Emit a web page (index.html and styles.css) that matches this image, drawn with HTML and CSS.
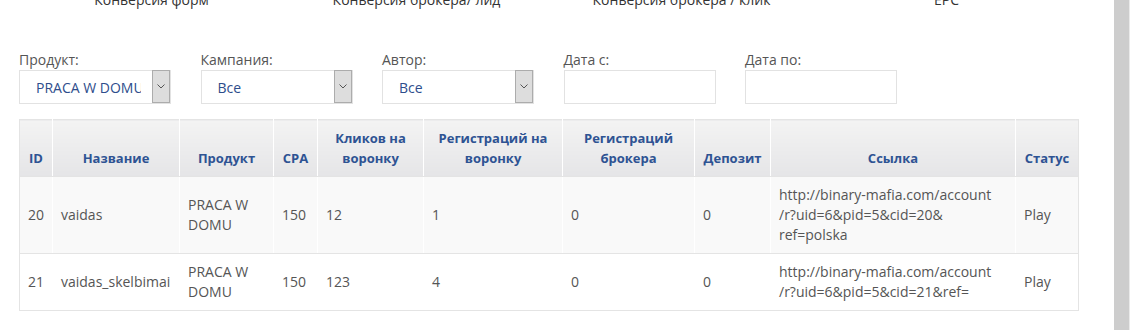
FILE: index.html
```html
<!DOCTYPE html>
<html lang="ru">
<head>
<meta charset="utf-8">
<title>Кампании</title>
<link rel="stylesheet" href="styles.css">
</head>
<body>
<div class="layout">
  <main class="page">
    <div class="stats">
      <div class="stat">Конверсия форм</div>
      <div class="stat">Конверсия брокера/ лид</div>
      <div class="stat">Конверсия брокера / клик</div>
      <div class="stat">EPC</div>
    </div>

    <div class="filters">
      <div class="field">
        <label class="label">Продукт:</label>
        <div class="select">
          <span class="select-value">PRACA W DOMU</span>
          <span class="select-btn"><svg width="8" height="5" viewBox="0 0 8 5"><path d="M0.5 0.5 L4 4 L7.5 0.5" fill="none" stroke="#555" stroke-width="1"/></svg></span>
        </div>
      </div>
      <div class="field">
        <label class="label">Кампания:</label>
        <div class="select">
          <span class="select-value">Все</span>
          <span class="select-btn"><svg width="8" height="5" viewBox="0 0 8 5"><path d="M0.5 0.5 L4 4 L7.5 0.5" fill="none" stroke="#555" stroke-width="1"/></svg></span>
        </div>
      </div>
      <div class="field">
        <label class="label">Автор:</label>
        <div class="select">
          <span class="select-value">Все</span>
          <span class="select-btn"><svg width="8" height="5" viewBox="0 0 8 5"><path d="M0.5 0.5 L4 4 L7.5 0.5" fill="none" stroke="#555" stroke-width="1"/></svg></span>
        </div>
      </div>
      <div class="field">
        <label class="label">Дата с:</label>
        <div class="input"></div>
      </div>
      <div class="field">
        <label class="label">Дата по:</label>
        <div class="input"></div>
      </div>
    </div>

    <table class="grid">
      <colgroup>
        <col class="c-id"><col class="c-name"><col class="c-prod"><col class="c-cpa"><col class="c-clicks"><col class="c-reg"><col class="c-regb"><col class="c-dep"><col class="c-link"><col class="c-status">
      </colgroup>
      <thead>
        <tr>
          <th>ID</th>
          <th>Название</th>
          <th>Продукт</th>
          <th>CPA</th>
          <th>Кликов на воронку</th>
          <th>Регистраций на воронку</th>
          <th>Регистраций брокера</th>
          <th>Депозит</th>
          <th>Ссылка</th>
          <th>Статус</th>
        </tr>
      </thead>
      <tbody>
        <tr class="odd">
          <td>20</td>
          <td>vaidas</td>
          <td>PRACA W DOMU</td>
          <td>150</td>
          <td>12</td>
          <td>1</td>
          <td>0</td>
          <td>0</td>
          <td>http://binary-mafia.com/account<br>/r?uid=6&amp;pid=5&amp;cid=20&amp;<br>ref=polska</td>
          <td>Play</td>
        </tr>
        <tr>
          <td>21</td>
          <td>vaidas_skelbimai</td>
          <td>PRACA W DOMU</td>
          <td>150</td>
          <td>123</td>
          <td>4</td>
          <td>0</td>
          <td>0</td>
          <td>http://binary-mafia.com/account<br>/r?uid=6&amp;pid=5&amp;cid=21&amp;ref=</td>
          <td>Play</td>
        </tr>
      </tbody>
    </table>
  </main>
  <aside class="scrollbar"></aside>
</div>
</body>
</html>
```

FILE: styles.css
```css
html, body {
  margin: 0;
  padding: 0;
  background: #fff;
  height: 100%;
  overflow: hidden;
}

body {
  font-family: "Open Sans", "Liberation Sans", Arial, sans-serif;
  font-size: 14px;
  color: #555;
}

.layout {
  display: flex;
  height: 330px;
}

.page {
  flex: 1;
  padding-left: 19px;
}

.scrollbar {
  width: 15px;
  background: #cdcdcd;
  border-right: 1px solid #eaeaea;
}

.stats {
  display: flex;
  width: 1060px;
  margin-top: -10px;
  height: 20px;
  line-height: 20px;
  font-size: 14px;
  color: #333;
}

.stat {
  width: 265px;
  text-align: center;
}

.filters {
  display: flex;
  margin-top: 41px;
}

.field {
  width: 152px;
  margin-right: 29.5px;
}

.label {
  display: block;
  line-height: 18px;
  height: 18px;
  margin-bottom: 1px;
  color: #555;
}

.select,
.input {
  box-sizing: border-box;
  height: 34px;
  border: 1px solid #e2e2e2;
  background: #fff;
}

.select {
  display: flex;
  align-items: stretch;
}

.select-value {
  flex: 1;
  padding-left: 16px;
  padding-top: 1px;
  margin-right: 11px;
  overflow: hidden;
  white-space: nowrap;
  line-height: 32px;
  color: #2e4d8c;
}

.select-btn {
  width: 16px;
  box-sizing: content-box;
  background: #dddddd;
  border: 1px solid #acacac;
  margin: -1px 0 0 0;
  display: flex;
  align-items: center;
  justify-content: center;
}

.grid {
  margin-top: 15px;
  width: 1060px;
  border-collapse: collapse;
  table-layout: fixed;
  border: 1px solid #e4e4e4;
}

.c-id { width: 33px; }
.c-name { width: 127px; }
.c-prod { width: 94px; }
.c-cpa { width: 44px; }
.c-clicks { width: 106px; }
.c-reg { width: 139px; }
.c-regb { width: 132px; }
.c-dep { width: 76px; }
.c-link { width: 245px; }
.c-status { width: 63px; }

.grid th {
  background: linear-gradient(#f3f3f3, #e5e5e7);
  color: #2e5393;
  font-size: 13px;
  font-weight: 700;
  text-align: center;
  vertical-align: bottom;
  padding: 8px 4px;
  line-height: 20px;
  border-left: 1px solid #fff;
  border-bottom: 1px solid #e4e4e4;
}

.grid th:first-child,
.grid td:first-child {
  border-left: 0;
}

.grid td {
  padding: 8px 8px;
  line-height: 20px;
  vertical-align: middle;
  border-left: 1px solid #fff;
  border-bottom: 1px solid #e4e4e4;
  color: #555;
  white-space: normal;
}

.grid tr.odd td {
  background: #f9f9f9;
}
```
